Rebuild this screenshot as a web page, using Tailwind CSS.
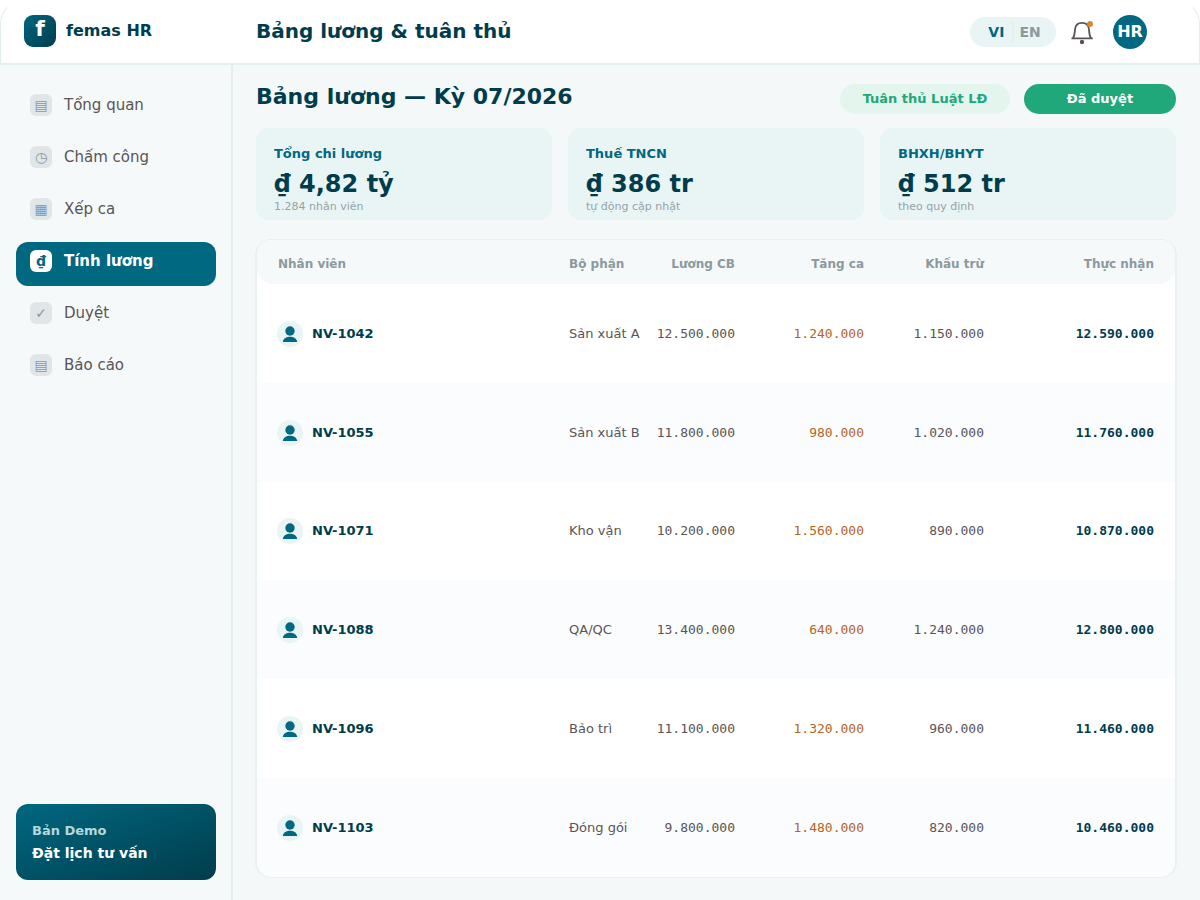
<!DOCTYPE html>
<html lang="vi">

<head>
  <meta charset="utf-8">
  <title>femas HR | Bảng lương</title>
  <meta name="viewport" content="width=device-width,initial-scale=1">
  <script src="https://cdn.jsdelivr.net/npm/@tailwindcss/browser@4"></script>
</head>

<body class="flex min-h-screen flex-col bg-[#f4f8f9] font-['DejaVu_Sans',sans-serif] text-[#5b5456]">
  <div class="bg-white">
    <header class="flex h-[65px] items-center rounded-t-3xl border-x border-t border-b-2 border-[#e3eeee] border-t-transparent bg-white pr-[52px] pl-[23px]">
      <a href="#" class="flex w-[232px] shrink-0 items-center gap-[10px] pb-[2px] text-base font-bold text-[#003d4c]">
        <span class="flex size-8 justify-center rounded-[9px] bg-linear-to-br from-[#006881] to-[#003d4c] text-[22px] leading-7 text-white">f</span>
        <span>femas HR</span>
      </a>
      <div class="grow pb-[2px] text-xl font-bold text-[#003d4c]">Bảng lương &amp; tuân thủ</div>
      <div class="flex h-[30px] w-[86px] items-center justify-center rounded-full bg-[#e9f5f5] pl-[3px] text-sm font-bold">
        <button type="button" class="pr-2 text-[#006881]">VI</button>
        <button type="button" class="border-l-2 border-[#e3eeee] pl-[5px] text-[#8b9a9f]">EN</button>
      </div>
      <button type="button" aria-label="Thông báo" class="ml-[14px]">
        <svg class="h-[26px] w-6" viewBox="0 0 24 26" fill="none">
          <path d="M1.500 19.300H22.800M3 19C4.800 17 4.600 14 5 10.500C5.400 6 8 3.900 12 3.900S18.600 6 19 10.500C19.400 14 19.200 17 21 19" stroke="#5b5456" stroke-width="1.800" />
          <circle cx="12" cy="23" r="2.200" fill="#5b5456" />
          <circle cx="20" cy="5" r="3" fill="#d9892b" />
        </svg>
      </button>
      <button type="button" class="ml-[19px] size-[34px] rounded-full bg-[#006881] text-base font-bold text-white">HR</button>
    </header>
  </div>

  <div class="flex grow">
    <aside class="flex w-[233px] shrink-0 flex-col justify-between border-r-2 border-[#e3eeee] bg-[#f5f9fa] px-4 pt-[21px] pb-5">
      <nav class="flex flex-col gap-2 text-[15px]">
        <a href="#" class="flex h-11 w-[200px] items-start gap-3 rounded-xl px-[14px] pt-2">
          <span class="flex size-[22px] items-center justify-center rounded-md bg-[#e0e5e7] text-sm text-[#8b9a9f]">▤</span>
          <span class="leading-[22px]">Tổng quan</span>
        </a>
        <a href="#" class="flex h-11 w-[200px] items-start gap-3 rounded-xl px-[14px] pt-2">
          <span class="flex size-[22px] items-center justify-center rounded-md bg-[#e0e5e7] text-sm text-[#8b9a9f]">◷</span>
          <span class="leading-[22px]">Chấm công</span>
        </a>
        <a href="#" class="flex h-11 w-[200px] items-start gap-3 rounded-xl px-[14px] pt-2">
          <span class="flex size-[22px] items-center justify-center rounded-md bg-[#e0e5e7] text-sm text-[#8b9a9f]">▦</span>
          <span class="leading-[22px]">Xếp ca</span>
        </a>
        <a href="#" aria-current="page" class="flex h-11 w-[200px] items-start gap-3 rounded-xl bg-[#006881] px-[14px] pt-2 font-bold text-white">
          <span class="flex size-[22px] items-center justify-center rounded-md bg-white text-sm text-[#006881]">₫</span>
          <span class="leading-[22px]">Tính lương</span>
        </a>
        <a href="#" class="flex h-11 w-[200px] items-start gap-3 rounded-xl px-[14px] pt-2">
          <span class="flex size-[22px] items-center justify-center rounded-md bg-[#e0e5e7] text-sm text-[#8b9a9f]">✓</span>
          <span class="leading-[22px]">Duyệt</span>
        </a>
        <a href="#" class="flex h-11 w-[200px] items-start gap-3 rounded-xl px-[14px] pt-2">
          <span class="flex size-[22px] items-center justify-center rounded-md bg-[#e0e5e7] text-sm text-[#8b9a9f]">▤</span>
          <span class="leading-[22px]">Báo cáo</span>
        </a>
      </nav>
      <a href="#" class="flex h-[76px] w-[200px] flex-col justify-center rounded-xl bg-linear-to-br from-[#006881] to-[#003d4c] px-4 font-bold">
        <span class="text-[13px] leading-[22px] text-[#b5d8dc]">Bản Demo</span>
        <span class="text-sm leading-[22px] text-white">Đặt lịch tư vấn</span>
      </a>
    </aside>

    <main class="flex grow flex-col pt-[19px] pr-[23px] pb-[22px] pl-[22px]">
      <div class="flex items-center px-px">
        <h1 class="grow pb-1 text-[22px] leading-[26px] font-bold text-[#003d4c]">Bảng lương — Kỳ 07/2026</h1>
        <span class="flex h-[30px] w-[170px] items-center justify-center rounded-full bg-[#e4f5ed] text-[13px] font-bold text-[#21a87a]">Tuân thủ Luật LĐ</span>
        <button type="button" class="ml-[14px] h-[30px] w-[152px] rounded-full bg-[#21a87a] text-[13px] font-bold text-white">Đã duyệt</button>
      </div>

      <section class="mt-[14px] grid grid-cols-3 gap-4 px-px">
        <div class="h-[92px] rounded-xl bg-[#e9f5f5] px-[18px] pt-4">
          <div class="text-[13px] leading-5 font-bold text-[#006881]">Tổng chi lương</div>
          <div class="text-2xl leading-10 font-bold text-[#003d4c]">₫ 4,82 tỷ</div>
          <div class="text-[11px] leading-[6px] text-[#94a3a8]">1.284 nhân viên</div>
        </div>
        <div class="h-[92px] rounded-xl bg-[#e9f5f5] px-[18px] pt-4">
          <div class="text-[13px] leading-5 font-bold text-[#006881]">Thuế TNCN</div>
          <div class="text-2xl leading-10 font-bold text-[#003d4c]">₫ 386 tr</div>
          <div class="text-[11px] leading-[6px] text-[#94a3a8]">tự động cập nhật</div>
        </div>
        <div class="h-[92px] rounded-xl bg-[#e9f5f5] px-[18px] pt-4">
          <div class="text-[13px] leading-5 font-bold text-[#006881]">BHXH/BHYT</div>
          <div class="text-2xl leading-10 font-bold text-[#003d4c]">₫ 512 tr</div>
          <div class="text-[11px] leading-[6px] text-[#94a3a8]">theo quy định</div>
        </div>
      </section>

      <!-- payroll -->
      <div class="mt-[19px] overflow-hidden rounded-2xl border-x-2 border-y border-[#e8f0f1] bg-white">
        <table class="w-full table-fixed border-separate border-spacing-0 text-[13px]">
          <thead class="text-right text-xs text-[#8b9a9f]">
            <tr class="h-11">
              <th scope="col" class="rounded-bl-2xl bg-[#f5f9fa] pt-1 pl-[21px] text-left">Nhân viên</th>
              <th scope="col" class="w-[80px] bg-[#f5f9fa] pt-1 text-left">Bộ phận</th>
              <th scope="col" class="w-[86px] bg-[#f5f9fa] pt-1 text-right">Lương CB</th>
              <th scope="col" class="w-[129px] bg-[#f5f9fa] pt-1 text-right">Tăng ca</th>
              <th scope="col" class="w-[120px] bg-[#f5f9fa] pt-1 text-right">Khấu trừ</th>
              <th scope="col" class="w-[191px] rounded-br-2xl bg-[#f5f9fa] pt-1 pr-[21px] text-right">Thực nhận</th>
            </tr>
          </thead>
          <tbody id="rows"></tbody>
        </table>
      </div>
    </main>
  </div>

  <script>
    const rows = [
      ['NV-1042', 'Sản xuất A', '12.500.000', '1.240.000', '1.150.000', '12.590.000'],
      ['NV-1055', 'Sản xuất B', '11.800.000', '980.000', '1.020.000', '11.760.000'],
      ['NV-1071', 'Kho vận', '10.200.000', '1.560.000', '890.000', '10.870.000'],
      ['NV-1088', 'QA/QC', '13.400.000', '640.000', '1.240.000', '12.800.000'],
      ['NV-1096', 'Bảo trì', '11.100.000', '1.320.000', '960.000', '11.460.000'],
      ['NV-1103', 'Đóng gói', '9.800.000', '1.480.000', '820.000', '10.460.000'],
    ];
    document.getElementById('rows').innerHTML = rows.map(([id, dept, base, extra, minus, net]) => `
      <tr class="h-[99px] nth-[3]:h-[98px] even:bg-[#fafcfd]">
        <td class="pl-5">
          <div class="flex items-center gap-[9px] font-bold text-[#003d4c]">
            <svg class="size-[26px]" viewBox="0 0 26 26">
              <circle cx="13" cy="13" r="13" fill="#e9f5f5" />
              <circle cx="13" cy="10" r="4.700" fill="#006881" />
              <path d="M5.800 21C6.500 13.900 19.500 13.900 20.200 21Z" fill="#006881" />
            </svg>
            <span>${id}</span>
          </div>
        </td>
        <td class="whitespace-nowrap">${dept}</td>
        <td class="text-right font-['DejaVu_Sans_Mono',monospace]">${base}</td>
        <td class="text-right font-['DejaVu_Sans_Mono',monospace] text-[#b5651d]">${extra}</td>
        <td class="text-right font-['DejaVu_Sans_Mono',monospace]">${minus}</td>
        <td class="pr-[21px] text-right font-['DejaVu_Sans_Mono',monospace] font-bold text-[#003d4c]">${net}</td>
      </tr>`).join('');
  </script>
</body>

</html>
